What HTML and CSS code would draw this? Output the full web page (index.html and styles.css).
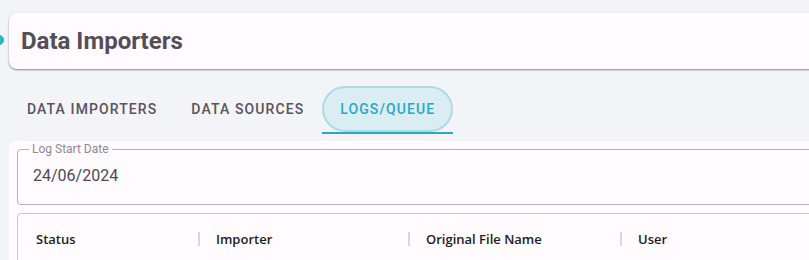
FILE: index.html
```html
<!DOCTYPE html>
<html lang="en">
<head>
<meta charset="utf-8"/>
<meta content="width=device-width, initial-scale=1.0" name="viewport"/>
<title>Data Importers</title>
<link rel="stylesheet" href="styles.css">
</head>
<body>
    <span class="side-dot"></span>
    <div class="page">
        <header class="title-card">
            <h1>Data Importers</h1>
        </header>

        <nav class="tabs">
            <a class="tab">Data Importers</a>
            <a class="tab">Data Sources</a>
            <a class="tab active">Logs/Queue</a>
        </nav>

        <section class="card">
            <fieldset class="field">
                <legend>Log Start Date</legend>
                <div class="field-value">24/06/2024</div>
            </fieldset>

            <div class="table-box">
                <div class="table-head">
                    <div class="th">Status</div>
                    <div class="th"><span class="sep"></span>Importer</div>
                    <div class="th"><span class="sep"></span>Original File Name</div>
                    <div class="th"><span class="sep"></span>User</div>
                </div>
            </div>
        </section>
    </div>
</body>
</html>
```

FILE: styles.css
```css
body {
    margin: 0;
    background-color: #f3f4f8;
    color: #4d4853;
    font-family: Roboto, "Liberation Sans", sans-serif;
    overflow: hidden;
}

.page {
    width: 1100px;
    padding: 13px 0 0 9px;
}

/* little cyan marker peeking in at the left edge */
.side-dot {
    position: absolute;
    left: -6px;
    top: 35px;
    width: 10px;
    height: 10px;
    border-radius: 50%;
    background-color: #2bb5cb;
}

/* Title card */
.title-card {
    height: 56px;
    background-color: #fffbfe;
    border-radius: 8px;
    box-shadow: 0 1px 2px rgba(0, 0, 0, 0.45);
    display: flex;
    align-items: center;
    padding-left: 12px;
}

.title-card h1 {
    margin: 0;
    font-size: 24px;
    font-weight: 700;
    color: #534e59;
}

/* Tabs */
.tabs {
    display: flex;
    margin-top: 17px;
    padding-left: 1px;
    height: 46px;
}

.tab {
    display: flex;
    align-items: center;
    padding: 0 17px;
    font-size: 14px;
    font-weight: 500;
    letter-spacing: 1.1px;
    text-transform: uppercase;
    color: #58535e;
    position: relative;
}

.tab.active {
    color: #2aa8bc;
    background-color: #d9edf3;
    border: 2px solid #acdbe5;
    border-radius: 23px;
    padding: 0 16px;
    height: 42px;
    margin-left: 1px;
}

.tab.active::after {
    content: "";
    position: absolute;
    left: -2px;
    right: -2px;
    bottom: -4px;
    height: 2px;
    background-color: #2aa8bc;
}

/* Content card */
.card {
    margin-top: 9px;
    background-color: #fffbfe;
    border-radius: 8px;
    padding: 8px;
    min-height: 200px;
}

.field {
    margin: -7px 0 0 0;
    padding: 0 15px;
    height: 63px;
    border: 1px solid #b5b0b9;
    border-radius: 4px;
    box-sizing: border-box;
}

.field legend {
    font-size: 12px;
    color: #8d8892;
    padding: 0 3px;
    margin-left: -4px;
    line-height: 14px;
}

.field-value {
    font-size: 16px;
    color: #4d4853;
    margin-top: 10px;
}

/* Table */
.table-box {
    margin-top: 8px;
    border: 1px solid #c9c5cc;
    border-radius: 4px;
}

.table-head {
    display: grid;
    grid-template-columns: 180px 210px 212px 1fr;
    height: 50px;
    align-items: center;
    font-family: "Open Sans", "Noto Sans", sans-serif;
    font-size: 13px;
    font-weight: 600;
    color: #1e1c22;
}

.th {
    display: flex;
    align-items: center;
    gap: 16px;
}

.th:first-child {
    padding-left: 18px;
}

.sep {
    width: 2px;
    height: 14px;
    background-color: #d6d8df;
}
```
